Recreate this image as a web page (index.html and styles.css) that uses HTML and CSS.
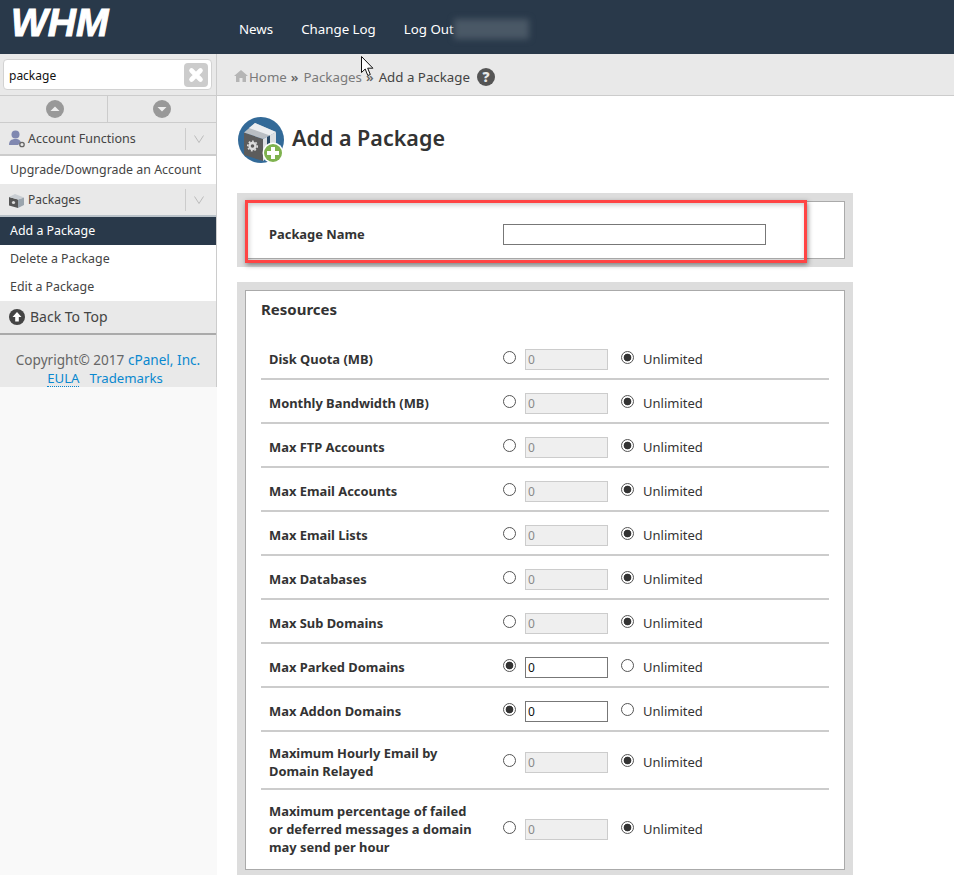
FILE: index.html
```html
<!DOCTYPE html>
<html lang="en">
<head>
<meta charset="utf-8">
<title>WHM - Add a Package</title>
<link rel="stylesheet" href="styles.css">
</head>
<body>
<header class="topbar">
  <div class="logo"><span class="logo-text">WHM</span></div>
  <nav class="topnav">
    <a class="topnav-link">News</a>
    <a class="topnav-link">Change Log</a>
    <a class="topnav-link">Log Out</a>
    <span class="blurred-user"></span>
  </nav>
</header>
<div class="layout">
  <aside class="sidebar">
    <div class="sidebar-nav">
      <div class="search-wrap">
        <div class="search">
          <span class="search-text">package</span>
          <span class="search-clear">
            <svg viewBox="0 0 24 24" width="24" height="24"><path d="M7.5 7.5l9 9M16.500 7.500l-9 9" stroke="#fff" stroke-width="4.600" stroke-linecap="round"/></svg>
          </span>
        </div>
      </div>
      <div class="jump-row">
        <div class="jump-cell jump-up">
          <svg viewBox="0 0 18 18" width="18" height="18"><circle cx="9" cy="9" r="9" fill="#999"/><path d="M4.500 11h9L9 6.500z" fill="#eee"/></svg>
        </div>
        <div class="jump-cell">
          <svg viewBox="0 0 18 18" width="18" height="18"><circle cx="9" cy="9" r="9" fill="#999"/><path d="M4.500 7h9L9 11.500z" fill="#eee"/></svg>
        </div>
      </div>
      <div class="group">
        <svg class="group-icon" viewBox="0 0 18 18" width="18" height="18"><circle cx="7.500" cy="4.500" r="4" fill="#8088b0"/><path d="M1 15c0-4 2-6 6.500-6 4 0 5 2 5.500 3.500L10 15z" fill="#8088b0"/><circle cx="14" cy="14.500" r="2.200" fill="none" stroke="#666" stroke-width="1.300"/></svg>
        <span class="group-label">Account Functions</span>
        <span class="group-toggle"><svg viewBox="0 0 10 8" width="10" height="8"><path d="M.5.500L5 7.500 9.500.500" fill="none" stroke="#bbb"/></svg></span>
      </div>
      <a class="item">Upgrade/Downgrade an Account</a>
      <div class="group group-packages">
        <svg class="group-icon" viewBox="0 0 18 18" width="18" height="18"><path d="M1 6l9 2.500V17l-9-2.500z" fill="#555"/><path d="M10 8.500l6-2V14l-6 3z" fill="#9aa4ad"/><path d="M1 6l6-3 9 3.500-6 2z" fill="#c9ced3"/><circle cx="5.500" cy="11.500" r="1.600" fill="#ddd"/></svg>
        <span class="group-label">Packages</span>
        <span class="group-toggle"><svg viewBox="0 0 10 8" width="10" height="8"><path d="M.5.500L5 7.500 9.500.500" fill="none" stroke="#bbb"/></svg></span>
      </div>
      <a class="item item-active">Add a Package</a>
      <a class="item">Delete a Package</a>
      <a class="item">Edit a Package</a>
      <div class="back-top">
        <svg viewBox="0 0 16 16" width="16" height="16"><circle cx="8" cy="8" r="8" fill="#444"/><path d="M8 3l4.500 5H9.800v4.500H6.200V8H3.500z" fill="#fff"/></svg>
        <span>Back To Top</span>
      </div>
      <div class="side-foot">
        <div>Copyright© 2017 <a class="foot-link">cPanel, Inc.</a></div>
        <div class="foot-links"><a class="foot-link foot-eula">EULA</a><a class="foot-link">Trademarks</a></div>
      </div>
    </div>
  </aside>
  <main class="main">
    <div class="crumbs">
      <svg class="crumb-home" viewBox="0 0 14 12" width="14" height="12"><path d="M7 0L0 6h2v6h3.500V8h3v4H12V6h2z" fill="#b5b5b5"/></svg>
      <a class="crumb-link">Home</a>
      <span class="crumb-sep">»</span>
      <a class="crumb-link">Packages</a>
      <span class="crumb-sep">»</span>
      <span class="crumb-current">Add a Package</span>
      <svg class="crumb-help" viewBox="0 0 18 18" width="18" height="18"><circle cx="9" cy="9" r="9" fill="#555"/><text x="9" y="14" text-anchor="middle" class="help-mark">?</text></svg>
    </div>
    <div class="content">
      <div class="title-row">
        <svg viewBox="0 0 46 46" width="46" height="46">
          <circle cx="23" cy="23" r="23" fill="#336a98"/>
          <path d="M6 15.500l19 6.500v22L6 38z" fill="#5c5c5c"/>
          <path d="M6 15.500L17 6l21 9-13 7z" fill="#b9bec3"/>
          <path d="M11 11l6-5 21 9-6 3.500z" fill="#eceef0"/>
          <path d="M25 22l13-7v18l-13 11z" fill="#dcdfe2"/>
          <path d="M29 20l3-1.500V36l-3 2.500z" fill="#2a4a68"/>
          <circle cx="14.500" cy="29" r="3" fill="none" stroke="#ddd" stroke-width="2.400"/>
          <circle cx="14.500" cy="29" r="4.800" fill="none" stroke="#ddd" stroke-width="1.500" stroke-dasharray="1.800 1.800"/>
        </svg>
        <h1 class="page-title">Add a Package</h1>
        <svg class="plus-badge" viewBox="0 0 22 22" width="22" height="22"><circle cx="11" cy="11" r="10.500" fill="#fff"/><circle cx="11" cy="11" r="9" fill="#7fb24f"/><path d="M11 5v12M5 11h12" stroke="#fff" stroke-width="4"/></svg>
      </div>

      <section class="panel panel-name">
        <div class="panel-inner panel-inner-name">
          <label class="row-label">Package Name</label>
          <input class="text-input" type="text">
        </div>
        <div class="highlight"></div>
      </section>

      <section class="panel">
        <div class="panel-inner">
          <h2 class="panel-title">Resources</h2>

          <div class="row">
            <div class="row-label">Disk Quota (MB)</div>
            <input class="radio" type="radio" name="r1">
            <input class="num" type="text" value="0" disabled>
            <input class="radio" type="radio" name="r1" checked>
            <span class="unl">Unlimited</span>
          </div>
          <div class="row">
            <div class="row-label">Monthly Bandwidth (MB)</div>
            <input class="radio" type="radio" name="r2">
            <input class="num" type="text" value="0" disabled>
            <input class="radio" type="radio" name="r2" checked>
            <span class="unl">Unlimited</span>
          </div>
          <div class="row">
            <div class="row-label">Max FTP Accounts</div>
            <input class="radio" type="radio" name="r3">
            <input class="num" type="text" value="0" disabled>
            <input class="radio" type="radio" name="r3" checked>
            <span class="unl">Unlimited</span>
          </div>
          <div class="row">
            <div class="row-label">Max Email Accounts</div>
            <input class="radio" type="radio" name="r4">
            <input class="num" type="text" value="0" disabled>
            <input class="radio" type="radio" name="r4" checked>
            <span class="unl">Unlimited</span>
          </div>
          <div class="row">
            <div class="row-label">Max Email Lists</div>
            <input class="radio" type="radio" name="r5">
            <input class="num" type="text" value="0" disabled>
            <input class="radio" type="radio" name="r5" checked>
            <span class="unl">Unlimited</span>
          </div>
          <div class="row">
            <div class="row-label">Max Databases</div>
            <input class="radio" type="radio" name="r6">
            <input class="num" type="text" value="0" disabled>
            <input class="radio" type="radio" name="r6" checked>
            <span class="unl">Unlimited</span>
          </div>
          <div class="row">
            <div class="row-label">Max Sub Domains</div>
            <input class="radio" type="radio" name="r7">
            <input class="num" type="text" value="0" disabled>
            <input class="radio" type="radio" name="r7" checked>
            <span class="unl">Unlimited</span>
          </div>
          <div class="row">
            <div class="row-label">Max Parked Domains</div>
            <input class="radio" type="radio" name="r8" checked>
            <input class="num" type="text" value="0">
            <input class="radio" type="radio" name="r8">
            <span class="unl">Unlimited</span>
          </div>
          <div class="row">
            <div class="row-label">Max Addon Domains</div>
            <input class="radio" type="radio" name="r9" checked>
            <input class="num" type="text" value="0">
            <input class="radio" type="radio" name="r9">
            <span class="unl">Unlimited</span>
          </div>
          <div class="row row-tall">
            <div class="row-label">Maximum Hourly Email by Domain Relayed</div>
            <input class="radio" type="radio" name="r10">
            <input class="num" type="text" value="0" disabled>
            <input class="radio" type="radio" name="r10" checked>
            <span class="unl">Unlimited</span>
          </div>
          <div class="row row-tall row-last">
            <div class="row-label">Maximum percentage of failed or deferred messages a domain may send per hour</div>
            <input class="radio" type="radio" name="r11">
            <input class="num" type="text" value="0" disabled>
            <input class="radio" type="radio" name="r11" checked>
            <span class="unl">Unlimited</span>
          </div>
        </div>
      </section>
    </div>
  </main>
</div>
<svg class="cursor" viewBox="0 0 13 21" width="13" height="21"><path d="M.5.500v16l3.700-3.500 2.600 6.500 2.500-1-2.600-6.300h5.200z" fill="#fff" stroke="#111"/></svg>
</body>
</html>
```
FILE: styles.css
```css
* { box-sizing: border-box; }
html, body { height: 875px; overflow: hidden; }
body {
  margin: 0;
  background: #fff;
  color: #333;
  font-family: "Noto Sans", "Open Sans", sans-serif;
  font-size: 13px;
  line-height: 18px;
  position: relative;
}

/* top bar */
.topbar {
  height: 54px;
  background: #29394a;
  display: flex;
  align-items: flex-start;
}
.logo {
  width: 239px;
  padding: 0 0 0 11px;
  flex: none;
}
.logo-text {
  display: block;
  color: #fff;
  font-family: "Liberation Sans", sans-serif;
  font-weight: 700;
  font-style: italic;
  font-size: 39px;
  line-height: 46px;
  -webkit-text-stroke: 1px #fff;
}
.topnav {
  display: flex;
  align-items: center;
  height: 58px;
  gap: 28px;
  font-size: 13.300px;
}
.topnav-link { color: #fff; }
.blurred-user {
  width: 75px;
  height: 20px;
  margin-left: -28px;
  background: #4a5866;
  filter: blur(3px);
}

/* layout */
.layout { display: flex; height: 821px; }
.sidebar {
  width: 217px;
  flex: none;
  background: #f9f9f9;
}
.sidebar-nav {
  background: #fff;
  border-right: 1px solid #ccc;
}
.search-wrap {
  height: 42px;
  padding: 5px 4px 5px 3px;
  background: #e9e9e9;
  border-bottom: 1px solid #ccc;
}
.search {
  height: 31px;
  background: #fff;
  border: 1px solid #d2d2d2;
  border-radius: 4px;
  display: flex;
  align-items: center;
  justify-content: space-between;
  padding: 0 3px 0 5px;
}
.search-text { color: #111; font-size: 12px; padding-top: 2px; }
.search-clear {
  width: 24px;
  height: 24px;
  background: #ccc;
  border-radius: 4px;
  display: block;
}
.search-clear svg { display: block; }
.jump-row {
  height: 27px;
  display: flex;
  background: #e9e9e9;
  border-bottom: 1px solid #ccc;
}
.jump-cell {
  flex: 1;
  display: flex;
  align-items: center;
  justify-content: center;
}
.jump-up { flex: none; width: 107px; padding-left: 2px; }
.jump-cell + .jump-cell { border-left: 1px solid #ccc; }
.group {
  height: 33px;
  background: #e9e9e9;
  border-bottom: 2px solid #ccc;
  display: flex;
  align-items: center;
  padding-left: 8px;
  font-size: 12.500px;
  color: #444;
}
.group-packages { font-size: 12px; border-bottom-color: #b9c2c9; }
.group-icon { flex: none; margin-right: 2px; }
.group-label { flex: 1; }
.group-toggle {
  width: 31px;
  height: 22px;
  padding-right: 4px;
  border-left: 1px solid #ccc;
  display: flex;
  align-items: center;
  justify-content: center;
}
.item {
  display: block;
  height: 28px;
  line-height: 28px;
  padding-left: 10px;
  font-size: 12.400px;
  color: #444;
  background: #fff;
}
.item-active { background: #29394a; color: #fff; }
.back-top {
  height: 34px;
  background: #e9e9e9;
  border-bottom: 2px solid #aaa;
  display: flex;
  align-items: center;
  gap: 5px;
  padding-left: 9px;
  font-size: 14px;
  color: #444;
}
.side-foot {
  height: 52px;
  padding-top: 16px;
  background: #e9e9e9;
  text-align: center;
  color: #666;
  font-size: 13.600px;
}
.foot-link { color: #0a88cf; }
.foot-links {
  display: flex;
  justify-content: center;
  gap: 10px;
  padding-right: 6px;
  font-size: 13.200px;
}
.foot-eula { border-bottom: 1px dotted #0a88cf; height: 18px; }

/* breadcrumbs */
.main { flex: 1; min-width: 0; }
.crumbs {
  height: 42px;
  background: #e9e9e9;
  border-bottom: 1px solid #ccc;
  display: flex;
  align-items: center;
  padding: 5px 0 0 17px;
  font-size: 13.300px;
}
.crumb-home { margin-right: 1px; margin-top: -2px; }
.crumb-link { color: #7a7a7a; }
.crumb-sep { color: #666; margin-left: 4px; margin-right: 5px; font-weight: 600; }
.crumb-current { color: #444; }
.crumb-help { margin-left: 7px; }
.help-mark { fill: #e9e9e9; font-family: "Open Sans", sans-serif; font-weight: 800; font-size: 14px; }

/* content */
.content { padding: 21px 0 0 20px; width: 636px; }
.title-row {
  position: relative;
  display: flex;
  align-items: center;
  gap: 8px;
  height: 46px;
  margin: 0 0 30px 1px;
}
.plus-badge { position: absolute; left: 24px; top: 25px; }
.page-title {
  margin: 0;
  color: #333;
  font-size: 21.500px;
  font-weight: 600;
  line-height: 30px;
  position: relative;
  top: -2px;
}
.panel {
  position: relative;
  width: 616px;
  background: #ddd;
  padding: 8px;
  margin-bottom: 15px;
}
.panel-inner {
  background: #fff;
  border: 1px solid #aaa;
  padding: 8px 15px 0;
  height: 580px;
}
.panel-inner-name {
  display: flex;
  align-items: center;
  height: 58px;
  padding: 8px 0 0 23px;
}
.panel-title {
  margin: 0;
  font-size: 15px;
  font-weight: 700;
  line-height: 21px;
  color: #333;
  height: 37px;
}
.row-label {
  width: 234px;
  flex: none;
  padding-right: 24px;
  font-weight: 700;
  font-size: 12.900px;
  line-height: 18px;
  color: #333;
}
.text-input {
  width: 263px;
  height: 21px;
  border: 1px solid #777;
  background: #fff;
  padding: 0;
}
.row {
  display: flex;
  align-items: center;
  min-height: 44px;
  padding: 4px 0 0 8px;
  border-bottom: 2px solid #ccc;
  width: 568px;
}
.row-tall { padding-top: 12px; padding-bottom: 8px; }
.row-last { border-bottom: 0; }
.radio {
  appearance: none;
  -webkit-appearance: none;
  width: 13px;
  height: 13px;
  margin: -4px 0 0;
  border: 1px solid #555;
  border-radius: 50%;
  background: #fff;
  flex: none;
}
.radio:checked { background: radial-gradient(circle, #333 0, #333 3.500px, #fff 4.200px); }
.num {
  width: 83px;
  height: 21px;
  margin: 0 13px 0 9px;
  padding: 0 0 0 2px;
  border: 1px solid #777;
  background: #fff;
  color: #111;
  font: 12px "Noto Sans", sans-serif;
}
.num:disabled {
  background: #efefef;
  border-color: #ccc;
  color: #8a8a8a;
}
.unl { margin-left: 9px; color: #333; }

/* annotation over the screenshot */
.highlight {
  position: absolute;
  left: 8px;
  top: 7px;
  width: 562px;
  height: 63px;
  border: 3px solid #ff4444;
  box-shadow: 1px 2px 5px rgba(0, 0, 0, .45), inset 1px 2px 5px rgba(0, 0, 0, .2);
  pointer-events: none;
}
.cursor { position: absolute; left: 361px; top: 56px; }
```
